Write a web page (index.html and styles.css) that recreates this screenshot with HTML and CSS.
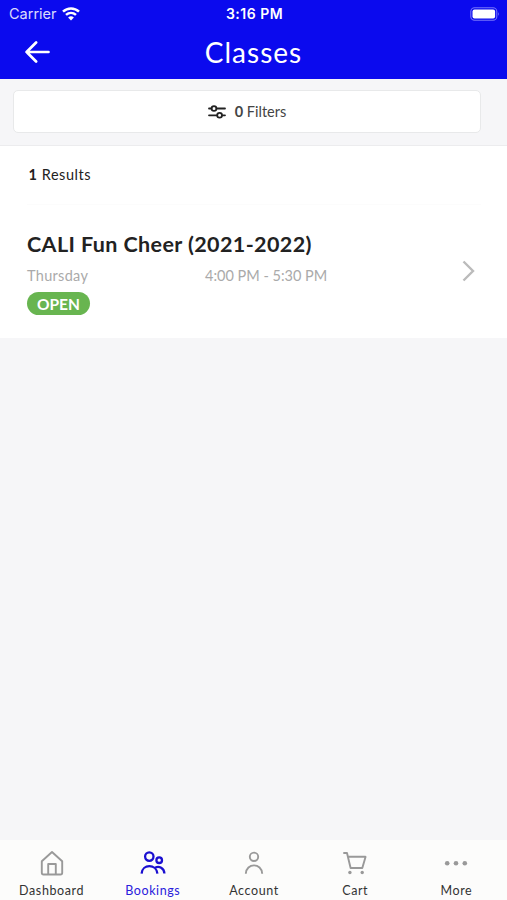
FILE: index.html
```html
<!DOCTYPE html>
<html lang="en">
<head>
  <meta charset="UTF-8">
  <title>Classes</title>
  <link rel="stylesheet" href="styles.css">
</head>
<body>

  <header class="header">
    <div class="status-bar">
      <div class="carrier">
        <span>Carrier</span>
        <svg width="18" height="14" viewBox="0 0 18 14" fill="none" stroke="#fff" stroke-width="2.5">
          <path d="M1 4.6 C5.5 .3 12.5 .3 17 4.6"/>
          <path d="M4 7.9 C7 5.2 11 5.2 14 7.9"/>
          <path d="M6.1 10.5 Q9 8.2 11.9 10.5 L9 13.4 Z" fill="#fff" stroke="none"/>
        </svg>
      </div>
      <span class="time">3:16 PM</span>
      <svg class="battery" width="30" height="14" viewBox="0 0 30 14">
        <rect x=".8" y=".8" width="26" height="12.4" rx="3.8" fill="none" stroke="#7674fa" stroke-width="1.1"/>
        <rect x="2.5" y="2.5" width="22.6" height="9" rx="2" fill="#fff"/>
        <path d="M28.2 5 Q30 7 28.2 9 Z" fill="#7674fa"/>
      </svg>
    </div>
    <div class="nav-bar">
      <svg class="back" width="26" height="22" viewBox="0 0 26 22" fill="none" stroke="#fff" stroke-width="2.7" stroke-linecap="round" stroke-linejoin="round">
        <path d="M23.5 11 H1.6 M11.1 1.5 L1.6 11 L11.1 20.5"/>
      </svg>
      <h1>Classes</h1>
    </div>
  </header>

  <div class="filters">
    <button class="filter-button">
      <svg width="18" height="14" viewBox="0 0 18 14" fill="none" stroke="#222" stroke-width="1.8" stroke-linecap="round">
        <path d="M1 3.5 H3.4 M8.6 3.5 H17 M1 10.3 H9 M14.2 10.3 H17"/>
        <circle cx="6" cy="3.5" r="2.4"/>
        <circle cx="11.6" cy="10.3" r="2.4"/>
      </svg>
      <span class="filter-label"><b>0</b> Filters</span>
    </button>
  </div>

  <main class="results">
    <p class="count"><b>1</b> <span>Results</span></p>
    <div class="class-row">
      <div class="class-info">
        <h2>CALI Fun Cheer (2021-2022)</h2>
        <div class="schedule">
          <span class="day">Thursday</span>
          <span class="hours">4:00 PM - 5:30 PM</span>
        </div>
        <span class="badge">OPEN</span>
      </div>
      <svg class="chevron" width="13" height="22" viewBox="0 0 13 22" fill="none" stroke="#bbb" stroke-width="2.4">
        <path d="M1.5 1.5 L11 11 L1.5 20.5"/>
      </svg>
    </div>
  </main>

  <nav class="tabs">
    <a class="tab">
      <svg width="28" height="28" viewBox="0 0 28 28" fill="none" stroke="#999" stroke-width="1.9" stroke-linejoin="round">
        <path d="M3.8 12.3 L14 3 L24.2 12.3 V23.7 Q24.2 25.5 22.4 25.5 H5.6 Q3.8 25.5 3.8 23.7 Z"/>
        <path d="M10.2 25.5 V15 H17.8 V25.5"/>
      </svg>
      <span>Dashboard</span>
    </a>
    <a class="tab active">
      <svg width="28" height="28" viewBox="0 0 28 28" fill="none" stroke="#1a0fd0" stroke-width="2.3">
        <circle cx="10.3" cy="7.6" r="4.2"/>
        <circle cx="20.2" cy="11.2" r="2.8"/>
        <path d="M2.6 24.6 C3.2 14.7 17.4 14.7 18.4 24.6"/>
        <path d="M16 18.7 C20 16.6 25.3 18.8 25.4 24.6"/>
      </svg>
      <span>Bookings</span>
    </a>
    <a class="tab">
      <svg width="28" height="28" viewBox="0 0 28 28" fill="none" stroke="#999" stroke-width="1.9">
        <circle cx="14" cy="7.8" r="4.2"/>
        <path d="M5.8 24.8 C6.2 13.6 21.8 13.6 22.2 24.8"/>
      </svg>
      <span>Account</span>
    </a>
    <a class="tab">
      <svg width="28" height="28" viewBox="0 0 28 28" fill="none" stroke="#999" stroke-width="1.9" stroke-linejoin="round">
        <path d="M2.3 4 H6 L9.6 19 H21.3 L24.6 7.8 H7.1"/>
        <circle cx="8.9" cy="23.5" r="1.7" fill="#999" stroke="none"/>
        <circle cx="21.2" cy="23.5" r="1.7" fill="#999" stroke="none"/>
      </svg>
      <span>Cart</span>
    </a>
    <a class="tab">
      <svg width="28" height="28" viewBox="0 0 28 28" fill="#999">
        <circle cx="5.2" cy="14.3" r="2.3"/>
        <circle cx="14" cy="14.3" r="2.3"/>
        <circle cx="22.8" cy="14.3" r="2.3"/>
      </svg>
      <span>More</span>
    </a>
  </nav>

</body>
</html>
```

FILE: styles.css
```css
* {
  box-sizing: border-box;
}

body {
  margin: 0;
  height: 100vh;
  display: flex;
  flex-direction: column;
  overflow: hidden;
  background: #f6f6f8;
  color: #222;
  font-family: Lato, "Noto Sans", sans-serif;
}

h1, h2, p {
  margin: 0;
}

svg {
  display: block;
  flex: none;
}

/* Header */
.header {
  height: 79px;
  background: #0b0aee;
  color: #fff;
}

.status-bar {
  height: 27px;
  padding: 0 7px 0 9px;
  display: grid;
  grid-template-columns: 1fr auto 1fr;
  align-items: center;
  font-family: Inter, sans-serif;
  font-size: 14.5px;
}

.carrier {
  display: flex;
  align-items: center;
  gap: 5px;
}

.carrier span {
  opacity: 0.85;
}

.time {
  font-weight: 600;
  font-size: 14px;
  letter-spacing: 0.5px;
}

.battery {
  justify-self: end;
}

.nav-bar {
  height: 50px;
  padding: 0 25px;
  display: grid;
  grid-template-columns: 1fr auto 1fr;
  align-items: center;
}

h1 {
  font-size: 28px;
  line-height: 50px;
  font-weight: 400;
  letter-spacing: 1px;
}

/* Filters */
.filters {
  height: 67px;
  padding: 11px 26px 0 13px;
  border-bottom: 1px solid #ececee;
}

.filter-button {
  width: 100%;
  height: 43px;
  padding: 0;
  display: flex;
  align-items: center;
  justify-content: center;
  gap: 9px;
  background: #fff;
  border: 1px solid #e8e9ea;
  border-radius: 5px;
  color: #444;
  font-family: inherit;
  font-size: 14.5px;
}

/* Results */
.results {
  height: 192px;
  padding: 0 26px 0 27px;
  background: #fff;
}

.count {
  height: 59px;
  padding-left: 1.5px;
  line-height: 57px;
  font-size: 14.5px;
  letter-spacing: 0.55px;
  border-bottom: 1px solid #fcfcfc;
}

.class-row {
  display: flex;
  justify-content: space-between;
  padding: 26px 6px 0 0;
}

h2 {
  font-size: 21.5px;
  line-height: 26px;
  font-weight: 700;
  letter-spacing: 0.4px;
  white-space: nowrap;
}

.schedule {
  display: grid;
  grid-template-columns: 178px auto;
  margin-top: 10px;
  line-height: 18px;
  font-size: 14.5px;
  color: #aaa;
}

.day {
  letter-spacing: 0.3px;
}

.badge {
  display: flex;
  align-items: center;
  justify-content: center;
  width: 63px;
  height: 23px;
  margin-top: 7px;
  border-radius: 12px;
  background: #68b550;
  color: #fff;
  font-size: 15.5px;
  font-weight: 700;
}

.chevron {
  margin-top: 29px;
}

/* Bottom tabs */
.tabs {
  height: 60px;
  margin-top: auto;
  padding: 9px 0 0 1px;
  display: grid;
  grid-template-columns: repeat(5, 1fr);
  background: #fcfcfb;
}

.tab {
  display: flex;
  flex-direction: column;
  align-items: center;
  font-size: 12.5px;
  line-height: 16px;
  letter-spacing: 0.6px;
  color: #333;
}

.tab span {
  margin-top: 6px;
}

.active {
  color: #2a20dc;
}
```
